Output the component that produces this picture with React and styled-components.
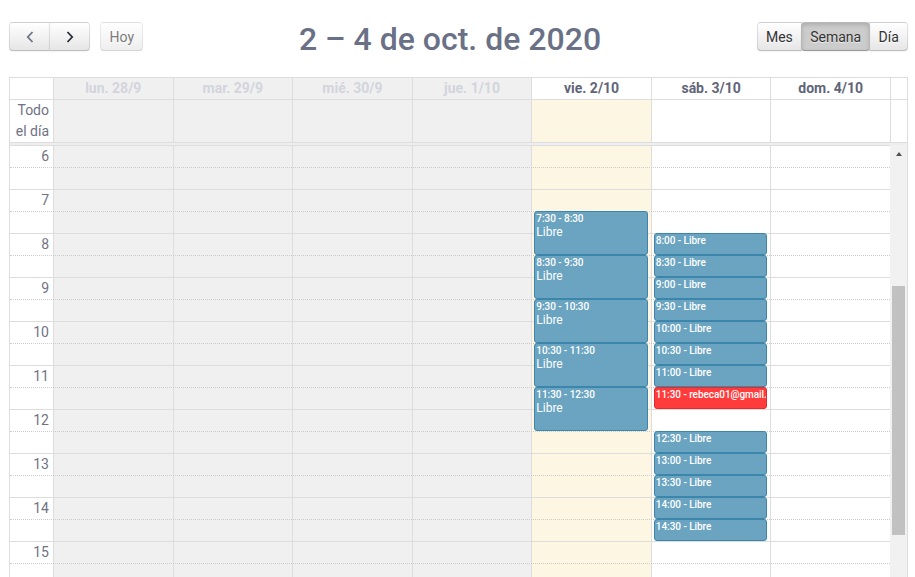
import React, { useLayoutEffect, useRef } from "react";
import styled, { createGlobalStyle } from "styled-components";

const SLOT = 22; // px per half hour
const HOUR = SLOT * 2;
const VIEW_H = 530;
const CONTENT_H = 48 * SLOT;
const SCROLL_TOP = 6 * HOUR;
const ARROW = 17;

const days = [
  { label: "lun. 28/9", kind: "past" },
  { label: "mar. 29/9", kind: "past" },
  { label: "mié. 30/9", kind: "past" },
  { label: "jue. 1/10", kind: "past" },
  { label: "vie. 2/10", kind: "today" },
  { label: "sáb. 3/10", kind: "future" },
  { label: "dom. 4/10", kind: "future" },
];

const events = [
  { day: 4, start: "7:30", end: "8:30", title: "Libre" },
  { day: 4, start: "8:30", end: "9:30", title: "Libre" },
  { day: 4, start: "9:30", end: "10:30", title: "Libre" },
  { day: 4, start: "10:30", end: "11:30", title: "Libre" },
  { day: 4, start: "11:30", end: "12:30", title: "Libre" },
  { day: 5, start: "8:00", end: "8:30", title: "Libre" },
  { day: 5, start: "8:30", end: "9:00", title: "Libre" },
  { day: 5, start: "9:00", end: "9:30", title: "Libre" },
  { day: 5, start: "9:30", end: "10:00", title: "Libre" },
  { day: 5, start: "10:00", end: "10:30", title: "Libre" },
  { day: 5, start: "10:30", end: "11:00", title: "Libre" },
  { day: 5, start: "11:00", end: "11:30", title: "Libre" },
  { day: 5, start: "11:30", end: "12:00", title: "rebeca01@gmail.com", busy: true },
  { day: 5, start: "12:30", end: "13:00", title: "Libre" },
  { day: 5, start: "13:00", end: "13:30", title: "Libre" },
  { day: 5, start: "13:30", end: "14:00", title: "Libre" },
  { day: 5, start: "14:00", end: "14:30", title: "Libre" },
  { day: 5, start: "14:30", end: "15:00", title: "Libre" },
];

const toMin = (t) => {
  const [h, m] = t.split(":").map(Number);
  return h * 60 + m;
};

const dayBg = {
  past: "#f0f0f0",
  today: "#fcf6e3",
  future: "#fff",
};

const GlobalStyle = createGlobalStyle`
  html, body {
    margin: 0;
    overflow: hidden;
    background: #fff;
  }
  body {
    font-family: Roboto, "Liberation Sans", sans-serif;
  }
`;

const Page = styled.div`
  padding: 22px 7px 0 9px;
`;

const Toolbar = styled.div`
  display: flex;
  align-items: center;
  height: 29px;
  margin-bottom: 26px;
`;

const ToolGroup = styled.div`
  display: flex;
  gap: 10px;
`;

const ButtonGroup = styled.div`
  display: flex;
  & > button + button {
    margin-left: -1px;
  }
  & > button:first-child {
    border-radius: 4px 0 0 4px;
  }
  & > button:last-child {
    border-radius: 0 4px 4px 0;
  }
`;

const Button = styled.button`
  height: 29px;
  padding: 0 ${(p) => (p.$icon ? "8.6px" : "8.2px")};
  margin: 0;
  display: flex;
  align-items: center;
  justify-content: center;
  font-family: Roboto, "Liberation Sans", sans-serif;
  font-size: 14px;
  color: #333;
  background-color: ${(p) => (p.$active ? "#ccc" : "#f5f5f5")};
  background-image: ${(p) => (p.$active ? "none" : "linear-gradient(to bottom, #fff, #e6e6e6)")};
  border: 1px solid;
  border-color: rgba(0, 0, 0, 0.1) rgba(0, 0, 0, 0.1) rgba(0, 0, 0, 0.25);
  border-radius: 4px;
  text-shadow: 0 1px 1px rgba(255, 255, 255, 0.75);
  box-shadow: ${(p) =>
    p.$active
      ? "inset 0 2px 4px rgba(0,0,0,.15), 0 1px 2px rgba(0,0,0,.05)"
      : p.disabled
      ? "none"
      : "inset 0 1px 0 rgba(255,255,255,.2), 0 1px 2px rgba(0,0,0,.05)"};
  opacity: ${(p) => (p.disabled ? 0.65 : 1)};
  position: relative;
  z-index: ${(p) => (p.$active ? 1 : 0)};
`;

const IconBox = styled.span`
  width: 22px;
  height: 21px;
  display: flex;
  align-items: center;
  justify-content: center;
  color: ${(p) => p.$tint};
`;

const Title = styled.h2`
  flex: 1;
  margin: 6px 0 0;
  text-align: center;
  font-size: 32px;
  line-height: 33px;
  font-weight: 500;
  color: #6a7086;
`;

const Calendar = styled.div`
  border: 1px solid #ddd;
  border-bottom: 0;
`;

const Row = styled.div`
  display: grid;
  grid-template-columns: 43px repeat(7, minmax(0, 1fr)) ${ARROW}px;
  border-bottom: 1px solid #ddd;
`;

const HeadCell = styled.div`
  height: 21px;
  line-height: 21px;
  border-left: ${(p) => (p.$axis ? "0" : "1px solid #ddd")};
  background: ${(p) => (p.$kind === "past" ? dayBg.past : "#fff")};
  color: ${(p) => (p.$kind === "past" ? "#d3d4dc" : "#5f6579")};
  font-size: 14px;
  font-weight: 700;
  text-align: center;
`;

const AllDayCell = styled.div`
  height: 42px;
  border-left: ${(p) => (p.$axis ? "0" : "1px solid #ddd")};
  background: ${(p) => (p.$kind ? dayBg[p.$kind] : "#fff")};
`;

const AxisText = styled.div`
  text-align: right;
  padding-right: 4px;
  font-size: 14px;
  line-height: 21px;
  color: #6f7284;
`;

const Divider = styled.div`
  height: 2px;
  background: #eee;
`;

const Body = styled.div`
  display: grid;
  grid-template-columns: minmax(0, 1fr) ${ARROW}px;
  height: ${VIEW_H}px;
`;

const Scroller = styled.div`
  height: ${VIEW_H}px;
  overflow: hidden;
`;

const ScrollBar = styled.div`
  display: flex;
  flex-direction: column;
  background: #f1f1f1;
`;

const ScrollArrow = styled.div`
  height: ${ARROW}px;
  display: flex;
  align-items: center;
  justify-content: center;

  &::before {
    content: "";
    width: 0;
    height: 0;
    border-left: 3.5px solid transparent;
    border-right: 3.5px solid transparent;
    border-bottom: 4px solid #505050;
  }
`;

const ScrollThumb = styled.div`
  margin: 0 2px;
  background: #c1c1c1;
`;

const TimeGrid = styled.div`
  display: grid;
  grid-template-columns: 43px repeat(7, minmax(0, 1fr));
  grid-template-rows: repeat(48, ${SLOT}px);
`;

const DayColumn = styled.div`
  grid-row: 1 / -1;
  grid-column: ${(p) => p.$col};
  border-left: 1px solid #ddd;
  background: ${(p) => dayBg[p.$kind]};
`;

const Slat = styled.div`
  grid-column: 1 / -1;
  grid-row: ${(p) => p.$row};
  border-top: 1px ${(p) => (p.$hour ? "solid #ddd" : "dotted #ccc")};
  box-sizing: border-box;
`;

const SlatLabel = styled.div`
  width: 43px;
  box-sizing: border-box;
  text-align: right;
  padding-right: 4px;
  font-size: 14px;
  line-height: 21px;
  color: #707384;
`;

const EventColumn = styled.div`
  grid-row: 1 / -1;
  grid-column: ${(p) => p.$col};
  position: relative;
  margin: 0 3px;
`;

const Event = styled.div`
  position: absolute;
  left: 0;
  right: 0;
  box-sizing: border-box;
  padding: 1px 1px 0;
  overflow: hidden;
  border: 1px solid ${(p) => (p.$busy ? "#e22b2b" : "#3c86ab")};
  border-radius: 3px;
  background: ${(p) => (p.$busy ? "#ff3b3b" : "#6aa4c1")};
  color: #fff;
`;

const EventTime = styled.div`
  font-size: 10px;
  line-height: 12px;
  font-weight: 500;
  letter-spacing: -0.05px;
  white-space: nowrap;
`;

const EventTitle = styled.div`
  font-size: 12px;
  line-height: 14px;
  white-space: nowrap;
`;

const Chevron = ({ dir }) => (
  <svg width="8" height="12" viewBox="0 0 8 12" fill="none">
    <path
      d={dir === "left" ? "M6.5 1 L1.8 6 L6.5 11" : "M1.5 1 L6.2 6 L1.5 11"}
      stroke="currentColor"
      strokeWidth="1.8"
    />
  </svg>
);

export default function App() {
  const scroller = useRef(null);

  useLayoutEffect(() => {
    if (scroller.current) scroller.current.scrollTop = SCROLL_TOP;
  }, []);

  const track = VIEW_H - ARROW * 2;
  const thumb = {
    marginTop: (track * SCROLL_TOP) / CONTENT_H,
    height: (track * VIEW_H) / CONTENT_H,
  };

  return (
    <Page>
      <GlobalStyle />
      <Toolbar>
        <ToolGroup>
          <ButtonGroup>
            <Button $icon aria-label="Anterior">
              <IconBox $tint="#6b7384">
                <Chevron dir="left" />
              </IconBox>
            </Button>
            <Button $icon aria-label="Siguiente">
              <IconBox $tint="#2b2f3a">
                <Chevron dir="right" />
              </IconBox>
            </Button>
          </ButtonGroup>
          <Button disabled>Hoy</Button>
        </ToolGroup>
        <Title>2 – 4 de oct. de 2020</Title>
        <ButtonGroup>
          <Button>Mes</Button>
          <Button $active>Semana</Button>
          <Button>Día</Button>
        </ButtonGroup>
      </Toolbar>

      <Calendar>
        <Row>
          <HeadCell $axis />
          {days.map((d) => (
            <HeadCell key={d.label} $kind={d.kind}>
              {d.label}
            </HeadCell>
          ))}
          <HeadCell />
        </Row>
        <Row>
          <AllDayCell $axis>
            <AxisText>
              Todo
              <br />
              el día
            </AxisText>
          </AllDayCell>
          {days.map((d) => (
            <AllDayCell key={d.label} $kind={d.kind} />
          ))}
          <AllDayCell />
        </Row>
        <Divider />
        <Body>
          <Scroller ref={scroller}>
            <TimeGrid>
              {days.map((d, i) => (
                <DayColumn key={d.label} $col={i + 2} $kind={d.kind} />
              ))}
              {Array.from({ length: 48 }, (_, i) => (
                <Slat key={i} $row={i + 1} $hour={i % 2 === 0}>
                  {i % 2 === 0 && <SlatLabel>{i / 2}</SlatLabel>}
                </Slat>
              ))}
              {days.map((d, i) => (
                <EventColumn key={d.label} $col={i + 2}>
                  {events
                    .filter((e) => e.day === i)
                    .map((e) => {
                      const start = toMin(e.start);
                      const dur = toMin(e.end) - start;
                      const style = { top: (start * SLOT) / 30, height: (dur * SLOT) / 30 };
                      return (
                        <Event key={e.start} $busy={e.busy} style={style}>
                          {dur >= 60 ? (
                            <>
                              <EventTime>
                                {e.start} - {e.end}
                              </EventTime>
                              <EventTitle>{e.title}</EventTitle>
                            </>
                          ) : (
                            <EventTime>
                              {e.start} - {e.title}
                            </EventTime>
                          )}
                        </Event>
                      );
                    })}
                </EventColumn>
              ))}
            </TimeGrid>
          </Scroller>
          <ScrollBar>
            <ScrollArrow />
            <ScrollThumb style={thumb} />
          </ScrollBar>
        </Body>
      </Calendar>
    </Page>
  );
}
